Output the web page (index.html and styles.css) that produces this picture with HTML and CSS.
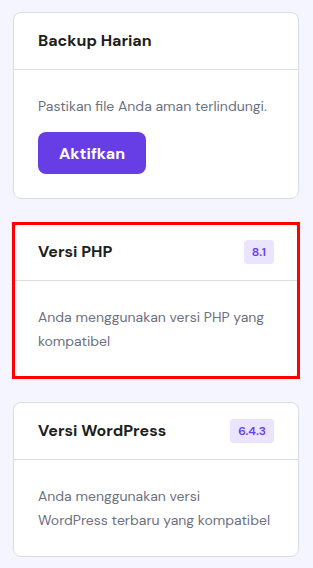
FILE: index.html
```html
<!DOCTYPE html>
<html lang="id">
<head>
<meta charset="utf-8">
<title>Status</title>
<link rel="stylesheet" href="styles.css">
</head>
<body>
<main class="list">
  <section class="card">
    <header class="card-head">
      <h2 class="card-title">Backup Harian</h2>
    </header>
    <div class="card-body">
      <p class="card-text">Pastikan file Anda aman terlindungi.</p>
      <button class="btn" type="button">Aktifkan</button>
    </div>
  </section>
  <section class="card card-focus">
    <header class="card-head">
      <h2 class="card-title">Versi PHP</h2>
      <span class="badge">8.1</span>
    </header>
    <div class="card-body">
      <p class="card-text">Anda menggunakan versi PHP yang kompatibel</p>
    </div>
  </section>
  <section class="card">
    <header class="card-head">
      <h2 class="card-title">Versi WordPress</h2>
      <span class="badge">6.4.3</span>
    </header>
    <div class="card-body">
      <p class="card-text">Anda menggunakan versi<br>WordPress terbaru yang kompatibel</p>
    </div>
  </section>
</main>
</body>
</html>
```
FILE: styles.css
```css
* { box-sizing: border-box; }
html, body {
  margin: 0;
  padding: 0;
  background: #f4f5ff;
}
body {
  font-family: "DM Sans", Inter, "Noto Sans", sans-serif;
  color: #1d1e20;
}
.list {
  display: flex;
  flex-direction: column;
  gap: 24px;
  padding: 12px 14px 12px 13px;
}
.card {
  position: relative;
  background: #fff;
  border: 1px solid #dadce0;
  border-radius: 8px;
}
.card-focus::after {
  content: "";
  position: absolute;
  inset: -2px;
  border: 3px solid #ff0000;
  pointer-events: none;
}
.card-head {
  display: flex;
  align-items: center;
  justify-content: space-between;
  padding: 16px 24px;
  border-bottom: 1px solid #dadce0;
  min-height: 56px;
}
.card-title {
  margin: 0;
  font-size: 16px;
  line-height: 24px;
  font-weight: 700;
  color: #1d1e20;
}
.badge {
  display: inline-flex;
  align-items: center;
  height: 24px;
  padding: 0 8px;
  border-radius: 4px;
  background: #ebe4ff;
  color: #673de6;
  font-size: 12px;
  font-weight: 600;
}
.card-body {
  padding: 24px;
}
.card-text {
  margin: 0;
  font-size: 14px;
  line-height: 24px;
  color: #6d7081;
}
.btn {
  margin-top: 14px;
  height: 42px;
  padding: 0 21px;
  border: 0;
  border-radius: 8px;
  background: #673de6;
  color: #fff;
  font-family: inherit;
  font-size: 16px;
  font-weight: 700;
}
```
